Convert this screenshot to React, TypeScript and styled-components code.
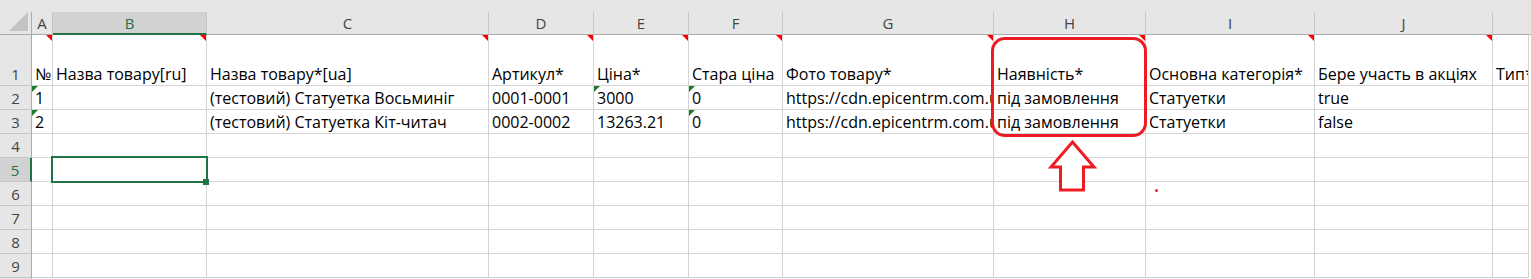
import React from 'react';
import styled, { createGlobalStyle, css } from 'styled-components';

const GlobalStyle = createGlobalStyle`
  html, body {
    margin: 0;
    padding: 0;
    background: #ffffff;
  }
  body {
    font-family: 'Open Sans', 'Noto Sans', 'Liberation Sans', sans-serif;
  }
`;

const GREEN = '#217346';
const RED = '#ed1c24';
const GRID = '#d4d4d4';

const columns = [
  { key: 'A', width: 21, label: 'A' },
  { key: 'B', width: 154, label: 'B' },
  { key: 'C', width: 282, label: 'C' },
  { key: 'D', width: 105, label: 'D' },
  { key: 'E', width: 95, label: 'E' },
  { key: 'F', width: 94, label: 'F' },
  { key: 'G', width: 211, label: 'G' },
  { key: 'H', width: 152, label: 'H' },
  { key: 'I', width: 169, label: 'I' },
  { key: 'J', width: 178, label: 'J' },
  { key: 'K', width: 36, label: '' },
];

const url = 'https://cdn.epicentrm.com.ua/temp/product/statuetka.jpg';

const rows: string[][] = [
  [
    '№',
    'Назва товару[ru]',
    'Назва товару*[ua]',
    'Артикул*',
    'Ціна*',
    'Стара ціна',
    'Фото товару*',
    'Наявність*',
    'Основна категорія*',
    'Бере участь в акціях',
    'Тип*',
  ],
  ['1', '', '(тестовий) Статуетка Восьминіг', '0001-0001', '3000', '0', url, 'під замовлення', 'Статуетки', 'true', ''],
  ['2', '', '(тестовий) Статуетка Кіт-читач', '0002-0002', '13263.21', '0', url, 'під замовлення', 'Статуетки', 'false', ''],
  [], [], [], [], [], [],
];

// cells that carry the little green "number as text" flag
const greenFlags = new Set(['A2', 'A3', 'E2', 'F2', 'F3']);
const commentCols = new Set(['A', 'B', 'C', 'D', 'E', 'F', 'G', 'H', 'I', 'J']);

const selectedCol = 'B';
const selectedRow = 5;

const Sheet = styled.div`
  position: relative;
  width: 1531px;
  height: 279px;
  overflow: hidden;
  background: #ffffff;
`;

const TopBand = styled.div`
  height: 12px;
  background: #e6e6e6;
`;

const Grid = styled.div<{ $cols: string }>`
  display: grid;
  grid-template-columns: ${(p) => p.$cols};
  grid-template-rows: 23px 51px repeat(9, 24px);
`;

const Corner = styled.div`
  position: relative;
  background: #e6e6e6;
  border-right: 1px solid #ababab;
  border-bottom: 1px solid #ababab;
  box-sizing: border-box;

  &::after {
    content: '';
    position: absolute;
    right: 3px;
    bottom: 3px;
    width: 0;
    height: 0;
    border-left: 19px solid transparent;
    border-bottom: 19px solid #c3c3c3;
  }
`;

const ColHeader = styled.div<{ $selected?: boolean; $edge?: boolean }>`
  display: flex;
  align-items: center;
  justify-content: center;
  box-sizing: border-box;
  background: ${(p) => (p.$selected ? '#d2d2d2' : '#e6e6e6')};
  border-right: 1px solid ${(p) => (p.$edge ? '#e6e6e6' : '#c6c6c6')};
  border-bottom: ${(p) => (p.$selected ? `2px solid ${GREEN}` : '1px solid #ababab')};
  color: ${(p) => (p.$selected ? GREEN : '#444444')};
  font-size: 15px;
  line-height: 20px;
  padding-top: ${(p) => (p.$selected ? '1px' : '0')};
`;

const RowHeader = styled.div<{ $selected?: boolean }>`
  display: flex;
  align-items: center;
  justify-content: center;
  box-sizing: border-box;
  background: ${(p) => (p.$selected ? '#d2d2d2' : '#e6e6e6')};
  border-bottom: 1px solid #c6c6c6;
  border-right: ${(p) => (p.$selected ? `2px solid ${GREEN}` : '1px solid #ababab')};
  color: ${(p) => (p.$selected ? GREEN : '#444444')};
  font-size: 15px;
  line-height: 20px;
  padding-top: 1px;
`;

const TallRowHeader = styled(RowHeader)`
  align-items: flex-end;
  padding-bottom: 1px;
`;

const Cell = styled.div<{ $comment?: boolean; $flag?: boolean; $edge?: boolean }>`
  position: relative;
  display: flex;
  align-items: flex-end;
  box-sizing: border-box;
  padding: 0 1px 1px 3px;
  border-right: 1px solid ${(p) => (p.$edge ? '#ababab' : GRID)};
  border-bottom: 1px solid ${(p) => (p.$edge ? '#ffffff' : GRID)};
  overflow: hidden;
  white-space: nowrap;
  color: #000000;
  font-size: 16px;
  line-height: 20px;

  ${(p) =>
    p.$comment &&
    css`
      &::after {
        content: '';
        position: absolute;
        top: 0;
        right: 0;
        width: 0;
        height: 0;
        border-left: 6px solid transparent;
        border-top: 6px solid #ff0000;
      }
    `}

  ${(p) =>
    p.$flag &&
    css`
      &::before {
        content: '';
        position: absolute;
        top: 0;
        left: 0;
        width: 0;
        height: 0;
        border-right: 6px solid transparent;
        border-top: 6px solid #1f7a2e;
      }
    `}
`;

const Selection = styled.div`
  position: absolute;
  left: 51px;
  top: 156px;
  width: 157px;
  height: 27px;
  box-sizing: border-box;
  border: 2px solid ${GREEN};
  pointer-events: none;
`;

const FillHandle = styled.div`
  position: absolute;
  left: 203px;
  top: 179px;
  width: 6px;
  height: 6px;
  background: ${GREEN};
`;

const Highlight = styled.div`
  position: absolute;
  left: 991px;
  top: 37px;
  width: 156px;
  height: 100px;
  box-sizing: border-box;
  border: 3px solid ${RED};
  border-radius: 14px;
  pointer-events: none;
`;

const ArrowWrap = styled.svg`
  position: absolute;
  left: 1048px;
  top: 139px;
`;

const Dot = styled.div`
  position: absolute;
  left: 1155px;
  top: 189px;
  width: 3px;
  height: 3px;
  border-radius: 50%;
  background: ${RED};
`;

export default function App() {
  const template = ['32px', ...columns.map((c) => `${c.width}px`), '1fr'].join(' ');

  return (
    <>
      <GlobalStyle />
      <Sheet>
        <TopBand />
        <Grid $cols={template}>
          <Corner />
          {columns.map((c) => (
            <ColHeader key={c.key} $selected={c.key === selectedCol} $edge={c.key === 'K'}>
              {c.label}
            </ColHeader>
          ))}
          <ColHeader $edge />

          {rows.map((row, ri) => {
            const n = ri + 1;
            const Header = n === 1 ? TallRowHeader : RowHeader;
            return (
              <React.Fragment key={n}>
                <Header $selected={n === selectedRow}>{n}</Header>
                {columns.map((c, ci) => (
                  <Cell
                    key={c.key}
                    $comment={n === 1 && commentCols.has(c.key)}
                    $flag={greenFlags.has(`${c.key}${n}`)}
                  >
                    {row[ci] ?? ''}
                  </Cell>
                ))}
                <Cell $edge />
              </React.Fragment>
            );
          })}
          <RowHeader />
        </Grid>

        <Selection />
        <FillHandle />
        <Highlight />
        <ArrowWrap width="50" height="55" viewBox="0 0 50 55">
          <polygon
            points="24.5,3 46,28 35.5,28 35.5,51 12.5,51 12.5,28 3,28"
            fill="#ffffff"
            stroke={RED}
            strokeWidth="3"
            strokeLinejoin="miter"
          />
        </ArrowWrap>
        <Dot />
      </Sheet>
    </>
  );
}
